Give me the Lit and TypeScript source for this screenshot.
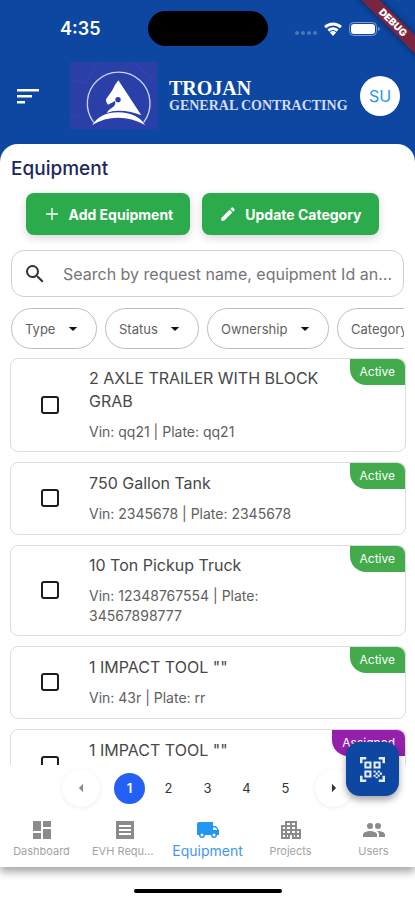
import { LitElement, html, css, svg, type TemplateResult } from "lit";
import { customElement, property, state } from "lit/decorators.js";
import { classMap } from "lit/directives/class-map.js";

interface Equipment {
  name: string;
  details: string;
  status: "Active" | "Assigned";
}

const EQUIPMENT: Equipment[] = [
  { name: "2 AXLE TRAILER WITH BLOCK GRAB", details: "Vin: qq21 | Plate: qq21", status: "Active" },
  { name: "750 Gallon Tank", details: "Vin: 2345678 | Plate: 2345678", status: "Active" },
  { name: "10 Ton Pickup Truck", details: "Vin: 12348767554 | Plate: 34567898777", status: "Active" },
  { name: '1 IMPACT TOOL ""', details: "Vin: 43r | Plate: rr", status: "Active" },
  { name: '1 IMPACT TOOL ""', details: "", status: "Assigned" },
];

const FILTERS = ["Type", "Status", "Ownership", "Category"];

const ICONS: Record<string, TemplateResult> = {
  search: svg`<path d="M15.5 14h-.79l-.28-.27A6.47 6.47 0 0 0 16 9.500 6.500 6.500 0 1 0 9.500 16c1.610 0 3.090-.59 4.230-1.570l.27.28v.79l5 4.990L20.490 19l-4.990-5zm-6 0C7.010 14 5 11.990 5 9.500S7.010 5 9.500 5 14 7.010 14 9.500 11.990 14 9.500 14z"/>`,
  add: svg`<path d="M20 12.900h-7.100V20h-1.800v-7.100H4v-1.800h7.100V4h1.800v7.100H20z"/>`,
  edit: svg`<path d="M3 17.250V21h3.750L17.810 9.940l-3.750-3.750L3 17.250zM20.710 7.040a1 1 0 0 0 0-1.410l-2.340-2.340a1 1 0 0 0-1.410 0l-1.830 1.830 3.750 3.750 1.830-1.830z"/>`,
  down: svg`<path d="M7 9.500l5 5 5-5z"/>`,
  left: svg`<path d="M14.500 7l-5 5 5 5z"/>`,
  right: svg`<path d="M9.500 7l5 5-5 5z"/>`,
  dashboard: svg`<path d="M3 13h8V3H3v10zm0 8h8v-6H3v6zm10 0h8V11h-8v10zm0-18v6h8V3h-8z"/>`,
  list: svg`<path fill-rule="evenodd" d="M3 3h18v18H3zM6 7v2h12V7zm0 4v2h12v-2zm0 4v2h12v-2z"/>`,
  truck: svg`<path d="M20 8h-3V4H3c-1.100 0-2 .9-2 2v11h2a3 3 0 0 0 6 0h6a3 3 0 0 0 6 0h2v-5l-3-4zM6 18.500a1.500 1.500 0 1 1 0-3 1.500 1.500 0 0 1 0 3zm13.500-9l1.960 2.500H17V9.500h2.500zm-1.500 9a1.500 1.500 0 1 1 0-3 1.500 1.500 0 0 1 0 3z"/>`,
  building: svg`<path fill-rule="evenodd" d="M2 21V7h4V3h12v8h4v10h-9v-4h-2v4zM4 9v2h2V9zm0 4v2h2v-2zm0 4v2h2v-2zM8 5v2h3V5zm5 0v2h3V5zM8 9v2h3V9zm5 0v2h3V9zm-5 4v2h3v-2zm5 0v2h3v-2zm5 0v2h2v-2zM8 17v2h1v-2zm7 0v2h1v-2zm3 0v2h2v-2z"/>`,
  users: svg`<path d="M16 11a3 3 0 1 0 0-6 3 3 0 0 0 0 6zm-8 0a3 3 0 1 0 0-6 3 3 0 0 0 0 6zm0 2c-2.330 0-7 1.170-7 3.500V19h14v-2.500c0-2.330-4.670-3.500-7-3.500zm8 0c-.29 0-.62.02-.97.05A4.200 4.200 0 0 1 17 16.500V19h6v-2.500c0-2.330-4.670-3.500-7-3.500z"/>`,
  menu: svg`<path d="M1 5h22v2.500H1zM1 11h15v2.500H1zM1 17h8v2.500H1z"/>`,
  wifi: svg`<path d="M12 20.500l3.800-4.400a5.600 5.600 0 0 0-7.600 0zM5.400 12.600l2.200 2.700a6.600 6.600 0 0 1 8.800 0l2.200-2.700a9.800 9.800 0 0 0-13.200 0zM1.300 8.300l2.300 2.700a12.400 12.400 0 0 1 16.800 0l2.300-2.700a15.600 15.600 0 0 0-21.400 0z"/>`,
  qr: svg`<g fill="none" stroke="currentColor" stroke-width="2.400"><path d="M1.200 6V1.200H6M18 1.200h4.800V6M22.800 18v4.800H18M6 22.800H1.200V18"/><path stroke-width="2" d="M5.200 5.200h4.800v4.800H5.200zM14 5.200h4.800v4.800H14zM5.200 14h4.800v4.800H5.200z"/></g><path d="M13 13h2v2h-2zM15 15h2v2h-2zM17 13h2v2h-2zM19 15h2v2h-2zM17 17h2v2h-2zM13 17h2v2h-2zM15 19h2v1.500h-2z"/>`,
};

const icon = (name: string, cls = "") =>
  html`<svg class="icon ${cls}" viewBox="0 0 24 24" fill="currentColor" aria-hidden="true">${ICONS[name]}</svg>`;

const base = css`
  :host { box-sizing: border-box; }
  *, *::before, *::after { box-sizing: border-box; }
  button, input, select { font: inherit; color: inherit; margin: 0; }
  button { border: 0; padding: 0; background: none; cursor: pointer; }
  .icon { display: block; width: 24px; height: 24px; flex: none; }
`;

@customElement("app-header")
export class AppHeader extends LitElement {
  static styles = [base, css`
    :host {
      display: block;
      position: relative;
      overflow: hidden;
      color: #fff;
      padding-bottom: 10px;
    }
    .status {
      display: grid;
      grid-template-columns: 1fr 120px 1fr;
      height: 57px;
      align-items: center;
    }
    .time { padding-left: 60px; font-size: 18px; font-weight: 600; line-height: 24px; }
    .island { height: 35px; border-radius: 18px; background: #000; }
    .signals { display: flex; align-items: center; gap: 6px; padding-left: 27px; }
    .dots { display: flex; gap: 2px; padding-top: 9px; }
    .dots i { width: 4px; height: 4px; border-radius: 50%; background: #4c76ba; }
    .wifi { width: 20px; height: 20px; }
    .battery { width: 32px; height: 14px; flex: none; }
    .bar { display: flex; align-items: center; height: 77px; padding: 0 15px 0 16px; }
    .logo { width: 87px; height: 67px; margin-left: 30px; flex: none; }
    .brand { flex: 1; padding-left: 12px; font-family: "Liberation Serif", serif; font-weight: 700; white-space: nowrap; }
    .brand-name { font-size: 20px; line-height: 20px; }
    .brand-sub { font-size: 14px; line-height: 16px; color: #d3dcf6; }
    .avatar {
      width: 40px; height: 40px; border-radius: 50%; flex: none;
      background: #fff; color: #2b93ee; font-size: 16px;
    }
    .debug {
      position: absolute; top: 16px; right: -38px; width: 120px; height: 13px;
      background: #7b2440; transform: rotate(45deg);
      box-shadow: 0 0 6px rgba(0, 0, 0, .5);
      font-size: 10px; line-height: 13px; font-weight: 900; text-align: center;
    }
  `];

  render() {
    return html`
      <div class="status">
        <span class="time">4:35</span>
        <span class="island"></span>
        <span class="signals">
          <span class="dots"><i></i><i></i><i></i><i></i></span>
          ${icon("wifi", "wifi")}
          <svg class="battery" viewBox="0 0 32 14" aria-hidden="true">
            <rect x=".5" y=".5" width="27" height="13" rx="4" fill="none" stroke="#7f9dce"/>
            <rect x="2" y="2" width="24" height="10" rx="3" fill="#fff"/>
            <path d="M29 5v4q2-1 2-2t-2-2z" fill="#7f9dce"/>
          </svg>
        </span>
      </div>
      <div class="bar">
        <button aria-label="Open menu">${icon("menu")}</button>
        <svg class="logo" viewBox="210 187 261 201" role="img" aria-label="Trojan logo">
          <rect x="210" y="187" width="261" height="201" fill="#2a3fa8"/>
          <path d="M210 240l45 12 40-65M400 187l71 60M210 345l30 8" fill="none" stroke="#3044ac" stroke-width="5"/>
          <path d="M281 368A94 94 0 1 1 431 368" fill="none" stroke="#c9d3f4" stroke-width="4"/>
          <path d="M355 242L424 347Q395 333 355 333Q336 333 320 340Q326 330 342 320Q348 312 345 304L324 315Q317 310 318 299L337 272Q344 255 355 242z" fill="#fff"/>
          <circle cx="354" cy="300" r="8" fill="#2a3fa8"/>
          <path d="M277 376Q300 338 355 338Q413 340 435 376Q396 354 354 354Q312 354 277 376z" fill="#fff"/>
        </svg>
        <div class="brand">
          <div class="brand-name">TROJAN</div>
          <div class="brand-sub">GENERAL CONTRACTING</div>
        </div>
        <button class="avatar" aria-label="Account SU">SU</button>
      </div>
      <div class="debug">DEBUG</div>
    `;
  }
}

@customElement("equipment-card")
export class EquipmentCard extends LitElement {
  @property({ attribute: false }) item!: Equipment;

  static styles = [base, css`
    :host { display: block; flex: none; }
    .card {
      position: relative;
      display: flex; align-items: center;
      min-height: 73px;
      padding: 8px 56px 9px 30px;
      border: 1px solid #dcdcdc; border-radius: 8px;
      background: #fff;
    }
    .check {
      appearance: none; width: 18px; height: 18px; flex: none;
      border: 2px solid #1d1d1d; border-radius: 3px;
    }
    .check:checked { background: #1d1d1d; }
    .text { flex: 1; min-width: 0; padding-left: 30px; display: grid; gap: 9px; }
    .name { font-size: 16px; line-height: 23px; color: #484848; }
    .meta { min-height: 20px; font-size: 14px; line-height: 20px; color: #606060; }
    .badge {
      position: absolute; top: 0; right: 0; padding: 0 10px;
      font-size: 12px; line-height: 26px; color: #fff;
      background: #43ab4b; border-radius: 0 8px 0 16px;
    }
    .assigned { background: #9420ab; }
  `];

  render() {
    const { name, details, status } = this.item;
    return html`
      <label class="card">
        <input class="check" type="checkbox" />
        <span class="text">
          <span class="name">${name}</span>
          <span class="meta">${details}</span>
        </span>
        <span class=${classMap({ badge: true, assigned: status === "Assigned" })}>${status}</span>
      </label>
    `;
  }
}

@customElement("page-switcher")
export class PageSwitcher extends LitElement {
  @state() private page = 1;

  static styles = [base, css`
    :host { display: flex; justify-content: center; align-items: center; gap: 14px; height: 46px; flex: none; }
    .arrow {
      display: grid; place-items: center; width: 38px; height: 38px;
      border-radius: 50%; background: #fff; box-shadow: 0 1px 4px rgba(0, 0, 0, .08);
    }
    .arrow:disabled { color: #8a8a8a; }
    .arrow .icon { width: 20px; height: 20px; }
    .pages { display: flex; gap: 8px; }
    .page { width: 31px; height: 31px; border-radius: 50%; font-size: 13px; color: #333; }
    .current { background: #2460f5; color: #fff; font-weight: 600; }
  `];

  render() {
    return html`
      <button class="arrow" aria-label="Previous page" ?disabled=${this.page === 1} @click=${() => this.page--}>${icon("left")}</button>
      <div class="pages">
        ${[1, 2, 3, 4, 5].map((n) => html`
          <button class=${classMap({ page: true, current: n === this.page })} @click=${() => (this.page = n)}>${n}</button>`)}
      </div>
      <button class="arrow" aria-label="Next page" ?disabled=${this.page === 5} @click=${() => this.page++}>${icon("right")}</button>
    `;
  }
}

@customElement("bottom-nav")
export class BottomNav extends LitElement {
  static styles = [base, css`
    :host { display: block; flex: none; position: relative; background: #fff; box-shadow: 0 5px 8px rgba(0, 0, 0, .35); clip-path: inset(0 0 -20px 0); }
    .nav { display: grid; grid-template-columns: repeat(5, minmax(0, 1fr)); height: 56px; }
    .item {
      display: flex; flex-direction: column; align-items: center; justify-content: center;
      padding: 0 9px; color: #8b8b8b; text-decoration: none; font-size: 11px;
    }
    .label { max-width: 100%; overflow: hidden; text-overflow: ellipsis; white-space: nowrap; line-height: 18px; color: #a3a3a3; }
    .selected { color: #2196f3; font-size: 14px; padding: 0; }
    .selected .label { color: #4397f2; }
  `];

  render() {
    const items = [
      ["dashboard", "Dashboard"],
      ["list", "EVH Requests"],
      ["truck", "Equipment"],
      ["building", "Projects"],
      ["users", "Users"],
    ];
    return html`
      <nav class="nav">
        ${items.map(([glyph, label]) => html`
          <a href="#${glyph}" class=${classMap({ item: true, selected: glyph === "truck" })}>
            ${icon(glyph)}<span class="label">${label}</span>
          </a>`)}
      </nav>
    `;
  }
}

@customElement("app-root")
export class AppRoot extends LitElement {
  static styles = [base, css`
    :host {
      display: flex; flex-direction: column; position: relative;
      height: 100vh; overflow: hidden;
      background: #0d47a1;
      font-family: Inter, Roboto, sans-serif;
      color: #333;
    }
    .sheet {
      flex: 1; min-height: 0; display: flex; flex-direction: column;
      padding-top: 13px; background: #fff; border-radius: 18px 18px 0 0;
    }
    .heading { margin: 0 11px 12px; font-size: 19px; line-height: 24px; font-weight: 500; color: #20265c; }
    .actions { display: flex; justify-content: center; gap: 12px; padding: 0 36px 0 25px; margin-bottom: 15px; }
    .action {
      display: flex; align-items: center; gap: 8px; height: 42px; padding: 0 17px;
      border-radius: 8px; background: #2bab4b; color: #fff;
      font-size: 14px; font-weight: 700; white-space: nowrap;
      box-shadow: 0 3px 8px rgba(0, 0, 0, .16);
    }
    .action .icon { width: 18px; height: 18px; }
    .search {
      display: flex; align-items: center; gap: 16px; height: 47px; flex: none;
      margin: 0 11px 11px; padding: 0 8px 0 11px;
      border: 1px solid #d2d2d2; border-radius: 13px; color: #333;
    }
    .field {
      flex: 1; min-width: 0; padding: 0; border: 0; outline: 0; background: none;
      font-size: 16px; text-overflow: ellipsis;
    }
    .field::placeholder { color: #757575; opacity: 1; }
    .filters { display: flex; gap: 8px; margin: 0 11px 9px; overflow: hidden; flex: none; }
    .filter { display: grid; align-items: center; flex: none; }
    .pick {
      grid-area: 1 / 1; appearance: none; height: 41px; padding: 0 40px 0 13px;
      border: 1px solid #bdbdbd; border-radius: 21px; background: #fff;
      font-size: 13px; color: #616161;
    }
    .caret { grid-area: 1 / 1; justify-self: end; width: 20px; height: 20px; margin-right: 14px; color: #111; pointer-events: none; }
    .list { flex: 1; min-height: 0; overflow: hidden; display: flex; flex-direction: column; gap: 10px; padding: 0 9px 0 10px; }
    .home { display: grid; place-items: center; height: 33px; padding-top: 14px; background: #fff; flex: none; }
    .pill { width: 148px; height: 4px; border-radius: 2px; background: #000; }
    .scan {
      position: absolute; right: 16px; bottom: 104px; width: 53px; height: 54px;
      display: grid; place-items: center; border-radius: 14px;
      background: #0d47a1; color: #e7edff; box-shadow: 0 4px 7px rgba(0, 0, 0, .35);
    }
    .scan .icon { width: 25px; height: 25px; }
  `];

  render() {
    return html`
      <app-header></app-header>
      <main class="sheet">
        <h1 class="heading">Equipment</h1>
        <div class="actions">
          <button class="action">${icon("add")}Add Equipment</button>
          <button class="action">${icon("edit")}Update Category</button>
        </div>
        <label class="search">
          ${icon("search")}
          <input class="field" type="text" aria-label="Search equipment" placeholder="Search by request name, equipment Id and more" />
        </label>
        <div class="filters">
          ${FILTERS.map((name) => html`
            <label class="filter">
              <select class="pick" aria-label=${name}><option>${name}</option></select>
              ${icon("down", "caret")}
            </label>`)}
        </div>
        <div class="list">
          ${EQUIPMENT.map((item) => html`<equipment-card .item=${item}></equipment-card>`)}
        </div>
        <page-switcher></page-switcher>
      </main>
      <bottom-nav></bottom-nav>
      <div class="home"><span class="pill"></span></div>
      <button class="scan" aria-label="Scan QR code">${icon("qr")}</button>
    `;
  }
}
